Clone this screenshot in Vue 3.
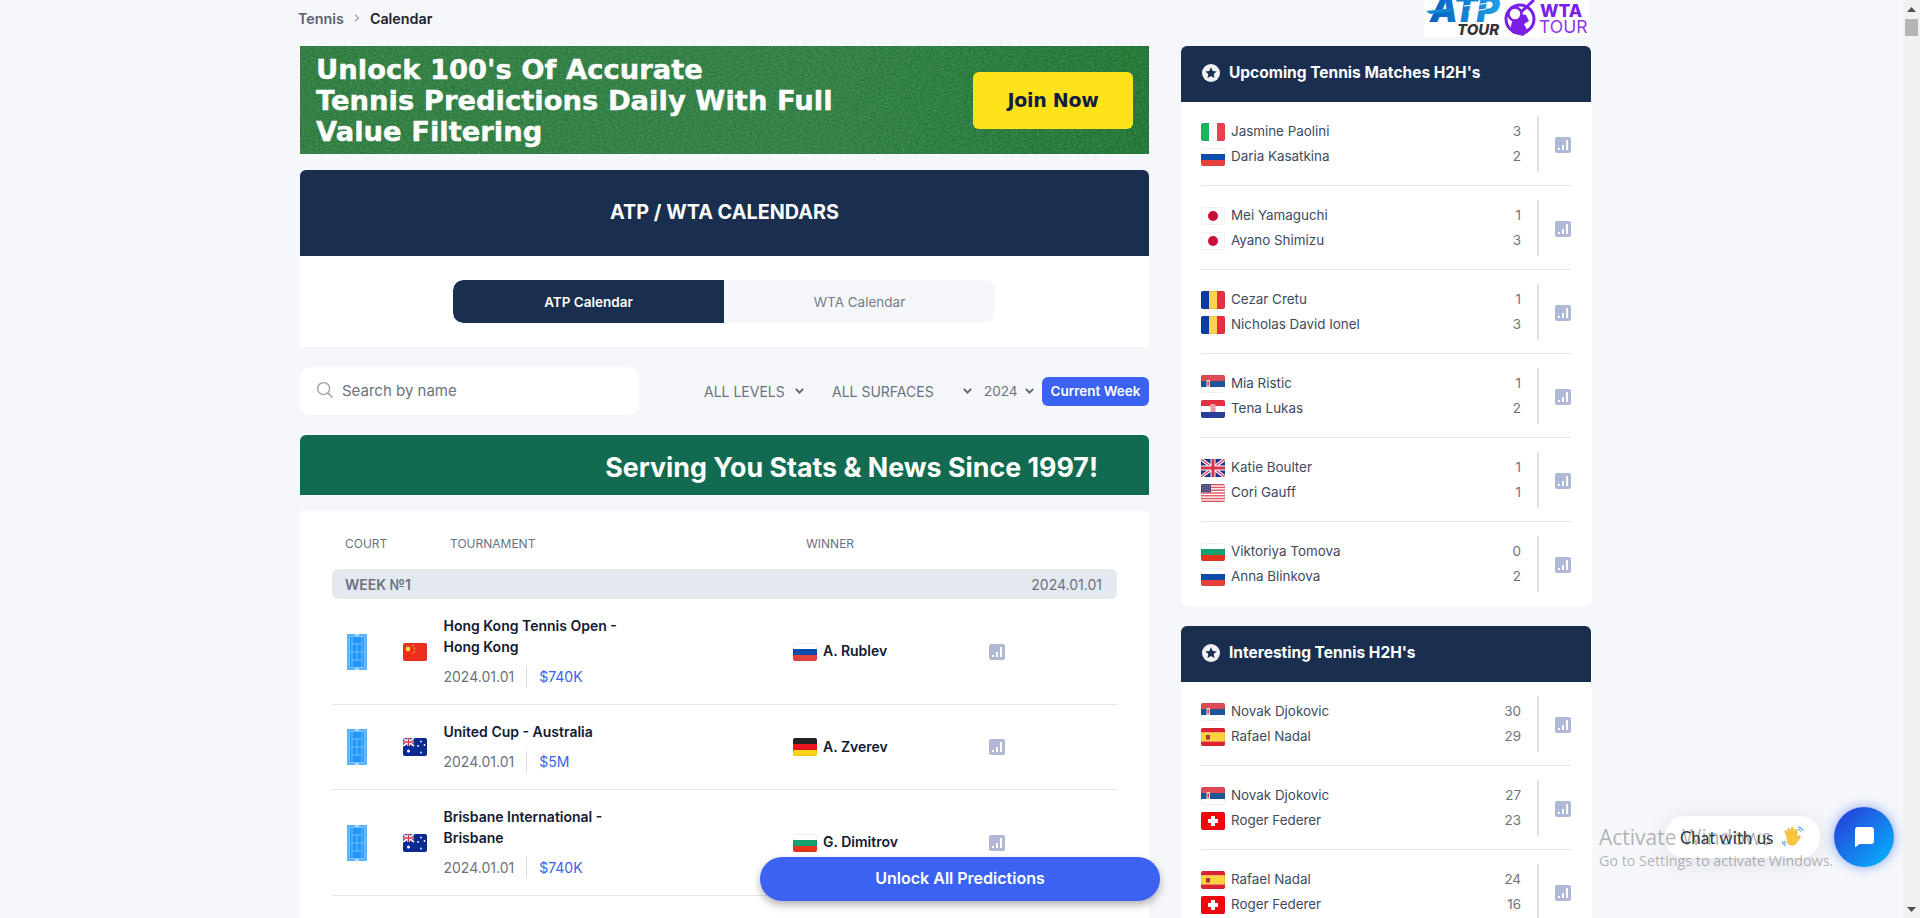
<script setup>
import { h } from 'vue'

const R = (x, y, w, hh, fill) => h('rect', { x, y, width: w, height: hh, fill })
const P = (d, fill, stroke, sw) => h('path', { d, fill: fill || 'none', stroke: stroke || 'none', 'stroke-width': sw || 0 })
const C = (cx, cy, r, fill) => h('circle', { cx, cy, r, fill })
const H3 = (a, b, c) => [R(0, 0, 24, 6, a), R(0, 6, 24, 6, b), R(0, 12, 24, 6, c)]
const V3 = (a, b, c) => [R(0, 0, 8, 18, a), R(8, 0, 8, 18, b), R(16, 0, 8, 18, c)]
const usStripes = () => {
  const out = [R(0, 0, 24, 18, '#fff')]
  for (let i = 0; i < 7; i++) out.push(R(0, i * 2.77, 24, 1.38, '#e0525c'))
  out.push(R(0, 0, 10, 8.3, '#3c3b6e'))
  for (let r = 0; r < 4; r++) for (let c = 0; c < 5; c++) out.push(R(0.8 + c * 1.9, 0.8 + r * 1.9, 0.8, 0.8, '#d8d8e8'))
  return out
}
const aus = () => [
  R(0, 0, 24, 18, '#0b2a92'),
  R(0, 0, 11, 8, '#1a2f9a'),
  P('M0 0L11 8M11 0L0 8', 'none', '#fff', 1.6),
  P('M5.5 0V8M0 4H11', 'none', '#fff', 2.6),
  P('M5.5 0V8M0 4H11', 'none', '#d9324a', 1.3),
  C(5.5, 13, 1.5, '#fff'), C(18, 3.5, .9, '#fff'), C(21.5, 7, .9, '#fff'), C(18, 14.5, .9, '#fff'), C(15, 8, .9, '#fff')
]
const flags = {
  it: () => V3('#1cb65d', '#fff', '#e8414f'),
  ru: () => H3('#fff', '#0d4ca8', '#e6403a'),
  jp: () => [R(0, 0, 24, 18, '#fff'), C(12, 9, 5, '#c90f3c')],
  ro: () => V3('#0b3d9c', '#fcd34f', '#e6303f'),
  rs: () => [...H3('#e04a55', '#1f5594', '#fff'), R(5.5, 5, 3.5, 7, '#f5d0d5'), R(6.5, 6.5, 1.5, 4, '#d9324a')],
  hr: () => [...H3('#e8303f', '#fff', '#2b3d9b'), R(9.5, 4, 5, 8, '#e9909a'), R(10.5, 5, 1, 1, '#fff'), R(12.5, 7, 1, 1, '#fff'), R(10.5, 9, 1, 1, '#fff')],
  gb: () => [
    R(0, 0, 24, 18, '#1f2f93'),
    P('M0 0L24 18M24 0L0 18', 'none', '#fff', 3.4),
    P('M0 0L24 18M24 0L0 18', 'none', '#d9324a', 1.1),
    P('M12 0V18M0 9H24', 'none', '#fff', 5),
    P('M12 0V18M0 9H24', 'none', '#d9324a', 3)
  ],
  us: usStripes,
  bg: () => H3('#fff', '#16a06e', '#e5341c'),
  de: () => H3('#222', '#e8161a', '#fbd214'),
  cn: () => [R(0, 0, 24, 18, '#ee2e1c'), C(5, 6, 2.4, '#fcd53f'), C(10, 2.8, .8, '#f8b13a'), C(11.5, 5.2, .8, '#f8b13a'), C(11.5, 8, .8, '#f8b13a'), C(10, 10, .8, '#f8b13a')],
  au: aus,
  es: () => [R(0, 0, 24, 4.5, '#df2230'), R(0, 4.5, 24, 9, '#fcd23f'), R(0, 13.5, 24, 4.5, '#df2230'), R(5, 7, 4, 4.5, '#b3342a')],
  ch: () => [R(0, 0, 24, 18, '#f5060f'), R(10, 4, 4, 10, '#fff'), R(7, 7, 10, 4, '#fff')]
}
const Flag = (props) =>
  h('svg', { viewBox: '0 0 24 18', width: 24, height: 18, style: 'display:block' }, [
    ...flags[props.c](),
    h('rect', { x: .5, y: .5, width: 23, height: 17, fill: 'none', stroke: 'rgba(30,40,70,.07)' })
  ])
Flag.props = ['c']

const tournaments = [
  { title: 'Hong Kong Tennis Open - Hong Kong', date: '2024.01.01', prize: '$740K', flag: 'cn', wFlag: 'ru', winner: 'A. Rublev' },
  { title: 'United Cup - Australia', date: '2024.01.01', prize: '$5M', flag: 'au', wFlag: 'de', winner: 'A. Zverev' },
  { title: 'Brisbane International - Brisbane', date: '2024.01.01', prize: '$740K', flag: 'au', wFlag: 'bg', winner: 'G. Dimitrov' }
]
const upcoming = [
  [['it', 'Jasmine Paolini', 3], ['ru', 'Daria Kasatkina', 2]],
  [['jp', 'Mei Yamaguchi', 1], ['jp', 'Ayano Shimizu', 3]],
  [['ro', 'Cezar Cretu', 1], ['ro', 'Nicholas David Ionel', 3]],
  [['rs', 'Mia Ristic', 1], ['hr', 'Tena Lukas', 2]],
  [['gb', 'Katie Boulter', 1], ['us', 'Cori Gauff', 1]],
  [['bg', 'Viktoriya Tomova', 0], ['ru', 'Anna Blinkova', 2]]
]
const interesting = [
  [['rs', 'Novak Djokovic', 30], ['es', 'Rafael Nadal', 29]],
  [['rs', 'Novak Djokovic', 27], ['ch', 'Roger Federer', 23]],
  [['es', 'Rafael Nadal', 24], ['ch', 'Roger Federer', 16]]
]
const cards = [
  { title: "Upcoming Tennis Matches H2H's", rows: upcoming },
  { title: "Interesting Tennis H2H's", rows: interesting }
]
</script>

<template>
  <div class="page">
    <main class="main">
      <nav class="crumbs">
        <span class="crumb-a">Tennis</span>
        <svg class="crumb-sep" width="6" height="8" viewBox="0 0 6 8"><path d="M1 .8L4.6 4L1 7.2" fill="none" stroke="#6b7280" stroke-width="1"/></svg>
        <span class="crumb-b">Calendar</span>
      </nav>

      <section class="promo">
        <svg class="grass" width="849" height="108">
          <filter id="grassNoise" x="0" y="0" width="100%" height="100%">
            <feTurbulence type="fractalNoise" baseFrequency="0.38 0.5" numOctaves="3" seed="4"/>
            <feColorMatrix type="matrix" values="0 0 0 0 0.7  0 0 0 0 0.9  0 0 0 0 0.7  0.9 0 0 0 -0.3"/>
          </filter>
          <rect width="849" height="108" filter="url(#grassNoise)"/>
        </svg>
        <p class="promo-text">Unlock 100's Of Accurate<br>Tennis Predictions Daily With Full<br>Value Filtering</p>
        <span class="join">Join Now</span>
      </section>

      <section class="cal-card">
        <h1 class="cal-title">ATP / WTA CALENDARS</h1>
        <div class="tabs-wrap">
          <div class="tabs">
            <span class="tab active">ATP Calendar</span>
            <span class="tab">WTA Calendar</span>
          </div>
        </div>
      </section>

      <div class="filters">
        <label class="search">
          <svg width="18" height="18" viewBox="0 0 18 18"><circle cx="7.6" cy="7.6" r="6" fill="none" stroke="#9aa3ad" stroke-width="1.4"/><path d="M12 12l4.4 4.6" stroke="#9aa3ad" stroke-width="1.4" fill="none"/></svg>
          <span class="search-ph">Search by name</span>
        </label>
        <div class="selects">
          <span class="sel sel-1">ALL LEVELS<svg width="9" height="6" viewBox="0 0 9 6"><path d="M.8 .8l3.700 3.800L8.200 .8" fill="none" stroke="#5e6875" stroke-width="1.8"/></svg></span>
          <span class="sel sel-2">ALL SURFACES<svg width="9" height="6" viewBox="0 0 9 6"><path d="M.8 .8l3.700 3.800L8.200 .8" fill="none" stroke="#5e6875" stroke-width="1.8"/></svg></span>
          <span class="sel sel-3">2024<svg width="9" height="6" viewBox="0 0 9 6"><path d="M.8 .8l3.700 3.800L8.200 .8" fill="none" stroke="#5e6875" stroke-width="1.8"/></svg></span>
          <span class="current">Current Week</span>
        </div>
      </div>

      <div class="since">Serving You Stats &amp; News Since 1997!</div>

      <section class="table">
        <div class="thead">
          <span class="th-court">COURT</span>
          <span class="th-tour">TOURNAMENT</span>
          <span>WINNER</span>
        </div>
        <div class="week"><b>WEEK №1</b><span>2024.01.01</span></div>
        <div v-for="t in tournaments" :key="t.title" class="trow">
          <svg class="court" width="20" height="36" viewBox="0 0 20 36">
            <rect width="20" height="36" fill="#5cb3fc"/>
            <rect x="2.5" y="2.5" width="15" height="31" fill="#2196fb"/>
            <path d="M2.5 2.5h15v31h-15zM5 2.5v31M15 2.5v31M5 10h10M5 26h10M10 10v16M2.5 18h15" fill="none" stroke="#7cc3fd" stroke-width=".9"/>
            <path d="M8 1h4M8 35h4" stroke="#fff" stroke-width="1.2"/>
          </svg>
          <span class="flag"><Flag :c="t.flag"/></span>
          <div class="tcell">
            <div class="ttitle">{{ t.title }}</div>
            <div class="tmeta"><span class="tdate">{{ t.date }}</span><span class="tprize">{{ t.prize }}</span></div>
          </div>
          <div class="twin"><span class="flag"><Flag :c="t.wFlag"/></span><b>{{ t.winner }}</b></div>
          <svg class="stat" width="16" height="16" viewBox="0 0 16 16"><rect width="16" height="16" rx="2" fill="#b1b8d6"/><path d="M3 11h2v2H3zM7 8h2v5H7zM11 3h2v10h-2z" fill="#fff"/></svg>
        </div>
      </section>
    </main>

    <aside class="side">
      <div class="logos">
        <svg width="165" height="37" viewBox="0 0 165 37">
          <defs>
            <linearGradient id="atpGrad" x1="0" y1="0" x2="1" y2="0">
              <stop offset="0" stop-color="#0a5fc0"/>
              <stop offset="1" stop-color="#1ea0e6"/>
            </linearGradient>
          </defs>
          <rect width="165" height="37" fill="#fff"/>
          <text x="6" y="22" class="logo-atp" fill="url(#atpGrad)">ATP</text>
          <path d="M2 11L30 8L24 12L6 14Z" fill="#1087d8"/>
          <path d="M40 6L66 3M44 12L62 9" stroke="#fff" stroke-width="1"/>
          <text x="33" y="35" class="logo-tour">TOUR</text>
          <circle cx="96" cy="19" r="14" fill="none" stroke="#7b1fe8" stroke-width="3"/>
          <path d="M88 33c-3-8 1-16 8-19l6 1 3 6-5 3 4 8-5 4z" fill="#7b1fe8"/>
          <path d="M97 12L110 0" stroke="#7b1fe8" stroke-width="3"/>
          <circle cx="91" cy="14" r="6.500" fill="#fff" stroke="#7b1fe8" stroke-width="2.500"/>
          <text x="116" y="17" class="logo-wta">WTA</text>
          <text x="115" y="33" class="logo-wt">TOUR</text>
        </svg>
      </div>

      <section v-for="card in cards" :key="card.title" class="card">
        <header class="card-head">
          <svg width="18" height="18" viewBox="0 0 18 18"><circle cx="9" cy="9" r="9" fill="#f1f3f6"/><path d="M9 3.2l1.7 3.7 4 .5-3 2.7.8 4L9 12.1l-3.5 2 .8-4-3-2.7 4-.5z" fill="#1a2f50"/></svg>
          <h2>{{ card.title }}</h2>
        </header>
        <div v-for="(row, i) in card.rows" :key="i" class="match">
          <div class="players">
            <div v-for="p in row" :key="p[1]" class="player">
              <span class="flag"><Flag :c="p[0]"/></span>
              <span class="pname">{{ p[1] }}</span>
              <span class="pscore">{{ p[2] }}</span>
            </div>
          </div>
          <div class="mstat">
            <svg width="16" height="16" viewBox="0 0 16 16"><rect width="16" height="16" rx="2" fill="#b1b8d6"/><path d="M3 11h2v2H3zM7 8h2v5H7zM11 3h2v10h-2z" fill="#fff"/></svg>
          </div>
        </div>
      </section>
    </aside>

    <button class="unlock">Unlock All Predictions</button>

    <div class="chat-bubble">
      <span>Chat with us</span>
      <svg width="25" height="25" viewBox="0 0 22 22">
        <path d="M5 9L3.5 6.5c-.7-1.2 1-2 1.700-1L7 8 5.800 4.400c-.4-1.300 1.500-1.800 2-.6L9.500 7.500 9 3c-.1-1.300 1.800-1.400 2-.2l1 5 .3-3c.2-1.200 1.900-1 1.900.3l-.2 6 1.500-1.500c1-.9 2.200.3 1.400 1.300l-3 4.500c-2 3-6 3-8 .5z" fill="#fcc63f" stroke="#e8a92a" stroke-width=".5"/>
        <path d="M15 1.500c2 .3 3.500 1.500 4.500 3.500M14.500 3.500c1.300.2 2.500 1 3 2.300M1 14c.3 2 1.500 3.500 3 4.500M3 14c.2 1 .7 1.800 1.500 2.500" fill="none" stroke="#5aa9e6" stroke-width="1"/>
      </svg>
    </div>
    <div class="chat-btn">
      <svg width="20" height="20" viewBox="0 0 20 20"><path d="M3 0h14a3 3 0 0 1 3 3v11a3 3 0 0 1-3 3H5.500L1 20.500V3a3 3 0 0 1 2-3z" fill="#fff"/></svg>
    </div>

    <div class="watermark">
      <div class="wm-1">Activate Windows</div>
      <div class="wm-2">Go to Settings to activate Windows.</div>
    </div>

    <div class="scrollbar">
      <svg width="9" height="5" viewBox="0 0 9 5"><path d="M4.500 0L9 5H0z" fill="#505050"/></svg>
      <div class="thumb"></div>
      <div class="track-gap"></div>
      <svg width="9" height="5" viewBox="0 0 9 5"><path d="M4.500 5L9 0H0z" fill="#505050"/></svg>
    </div>
  </div>
</template>

<style scoped>
.page {
  position: relative;
  display: flex;
  align-items: stretch;
  gap: 32px;
  height: 918px;
  padding-left: 300px;
  box-sizing: border-box;
  overflow: hidden;
  background: #f5f7fa;
  font-family: Inter, "Liberation Sans", sans-serif;
}
.main { width: 849px; flex: none; display: flex; flex-direction: column; }
.crumbs { height: 36px; display: flex; align-items: center; gap: 9px; margin-left: -2px; font-size: 14.300px; font-weight: 600; margin-bottom: 10px; }
.crumb-a { color: #5b6470; }
.crumb-b { color: #1a2433; margin-left: 1px; }
.crumb-sep { margin-left: 1px; }

.promo {
  position: relative;
  height: 108px;
  flex: none;
  margin-bottom: 16px;
  overflow: hidden;
  display: flex;
  align-items: center;
  justify-content: space-between;
  padding: 0 16px;
  box-sizing: border-box;
  background: linear-gradient(90deg, #2c7a3e 0%, #2d7d42 60%, #1f7232 100%);
}
.grass { position: absolute; inset: 0; opacity: .34; }
.promo-text {
  position: relative;
  margin: 0;
  font-family: "DejaVu Sans", Inter, sans-serif;
  font-size: 27.400px;
  line-height: 31px;
  font-weight: 700;
  color: #fff;
  -webkit-text-stroke: .4px #fff;
}
.join {
  position: relative;
  width: 160px;
  height: 57px;
  display: flex;
  align-items: center;
  justify-content: center;
  background: #fee31a;
  border-radius: 6px;
  color: #141c44;
  font-family: "DejaVu Sans", Inter, sans-serif;
  font-size: 19px;
  font-weight: 700;
  letter-spacing: -.3px;
}

.cal-card { background: #fff; flex: none; margin-bottom: 20px; border-radius: 6px 6px 0 0; }
.cal-title {
  margin: 0;
  height: 84px;
  padding-bottom: 2px;
  display: flex;
  align-items: center;
  justify-content: center;
  background: #1a2f50;
  border-radius: 6px 6px 0 0;
  color: #fff;
  font-size: 19.800px;
  font-weight: 700;
}
.tabs-wrap { display: flex; justify-content: center; padding: 24px 1px 24px 0; }
.tabs { width: 542px; height: 43px; display: flex; border-radius: 10px; overflow: hidden; background: #f5f7fa; }
.tab { flex: 1; display: flex; align-items: center; justify-content: center; font-size: 13.500px; color: #777e88; }
.tab.active { background: #1a2f50; color: #fff; font-weight: 600; border-radius: 10px 0 0 10px; }

.filters { display: flex; align-items: center; justify-content: space-between; height: 48px; margin-bottom: 20px; flex: none; }
.search {
  width: 339px;
  height: 48px;
  background: #fff;
  border-radius: 10px;
  display: flex;
  align-items: center;
  gap: 8px;
  padding: 0 0 2px 16px;
  box-sizing: border-box;
}
.search-ph { font-size: 15px; color: #6b7280; }
.selects { display: flex; align-items: center; height: 29px; }
.sel { display: flex; align-items: center; justify-content: space-between; font-size: 14px; color: #6b7280; }
.sel-1 { width: 100px; margin-right: 28px; }
.sel-2 { width: 140px; margin-right: 12px; }
.sel-3 { width: 50px; margin-right: 8px; font-size: 13.500px; }
.current {
  width: 107px;
  height: 29px;
  display: flex;
  align-items: center;
  justify-content: center;
  background: #3b62f3;
  border-radius: 6px;
  color: #fff;
  font-size: 13.500px;
  font-weight: 600;
}

.since {
  height: 60px;
  flex: none;
  box-sizing: border-box;
  padding: 3px 51px 0 0;
  display: flex;
  align-items: center;
  justify-content: flex-end;
  margin-bottom: 16px;
  background: #126b50;
  border-radius: 6px 6px 0 0;
  color: #fff;
  font-size: 26.800px;
  font-weight: 700;
}

.table { flex: 1; background: #fff; padding: 0 32px; }
.thead { height: 58px; box-sizing: border-box; padding: 7px 0 0 13px; display: flex; align-items: center; font-size: 12px; color: #6b7280; }
.th-court { width: 105px; }
.th-tour { width: 356px; }
.week {
  height: 30px;
  display: flex;
  align-items: center;
  justify-content: space-between;
  padding: 0 15px 0 13px;
  background: #e4e9f0;
  border-radius: 6px;
  font-size: 14px;
  color: #6b7280;
}
.week b { font-weight: 600; }
.trow {
  display: flex;
  align-items: center;
  padding: 17px 0 17px 15px;
  border-bottom: 1px solid #e3e6ea;
}
.court { flex: none; margin-right: 36px; }
.flag { display: block; width: 24px; height: 18px; flex: none; border-radius: 2px; overflow: hidden; }
.tcell { width: 349.500px; margin-left: 16.500px; flex: none; }
.ttitle { width: 190px; margin-top: -1px; font-size: 14px; line-height: 21px; font-weight: 600; color: #111a33; }
.tmeta { display: flex; margin-top: 9px; height: 21px; align-items: center; font-size: 14px; }
.tdate { color: #6b7280; padding-right: 12px; border-right: 1px solid #d9dde3; line-height: 21px; }
.tprize { color: #3b62f3; padding-left: 12px; }
.twin { width: 196px; flex: none; display: flex; align-items: center; gap: 6px; font-size: 14px; color: #111a33; }
.twin b { font-weight: 600; margin-top: -2px; }
.stat { flex: none; }

.side { width: 411px; flex: none; display: flex; flex-direction: column; }
.logos { height: 46px; flex: none; display: flex; justify-content: flex-end; padding-right: 3px; box-sizing: border-box; }
.logos svg { display: block; }
.logo-atp { font: italic 900 35px Inter, sans-serif; letter-spacing: -1px; }
.logo-tour { font: italic 800 15px Inter, sans-serif; fill: #333; }
.logo-wta { font: 800 17.500px Inter, sans-serif; fill: #7b1fe8; }
.logo-wt { font: 400 17.500px Inter, sans-serif; fill: #8a34ea; }

.card { background: #fff; border-radius: 6px; margin-bottom: 20px; flex: none; }
.card-head {
  height: 56px;
  box-sizing: border-box;
  padding: 0 0 3px 21px;
  display: flex;
  align-items: center;
  gap: 9px;
  background: #1a2f50;
  border-radius: 6px 6px 0 0;
  margin-right: 1px;
}
.card-head h2 { margin: 0; font-size: 15.500px; font-weight: 700; color: #fff; }
.match {
  display: flex;
  margin: 0 21px 0 20px;
  padding: 14px 0 13px;
  border-bottom: 1px solid #e3e5e8;
}
.match:last-child { border-bottom: 0; padding-bottom: 14px; }
.players { width: 320px; height: 56px; flex: none; display: flex; flex-direction: column; justify-content: center; gap: 7px; }
.player { display: flex; align-items: center; height: 18px; font-size: 13.400px; }
.pname { flex: 1; margin: -2px 0 0 6px; color: #3d4a5f; }
.pscore { color: #6b7280; margin-top: -2px; }
.mstat {
  margin-left: 16px;
  flex: 1;
  border-left: 2px solid #dcdfe5;
  display: flex;
  align-items: center;
  justify-content: flex-end;
  padding-top: 2px;
}

.unlock {
  position: absolute;
  left: 760px;
  top: 857px;
  width: 400px;
  height: 44px;
  padding: 0 0 2px;
  border: 0;
  border-radius: 22px;
  background: #3b62f3;
  box-shadow: 0 4px 8px rgba(0, 0, 0, .3);
  color: #fff;
  font: 600 16px Inter, sans-serif;
}
.chat-bubble {
  position: absolute;
  left: 1665px;
  top: 816px;
  width: 155px;
  height: 42px;
  display: flex;
  align-items: center;
  gap: 8px;
  padding-left: 15px;
  box-sizing: border-box;
  background: #fff;
  border-radius: 20px;
  box-shadow: 0 4px 24px rgba(20, 30, 60, .1);
  font: 400 17px Lato, sans-serif;
  color: #2d3748;
}
.chat-btn {
  position: absolute;
  left: 1834px;
  top: 807px;
  width: 60px;
  height: 60px;
  display: flex;
  align-items: center;
  justify-content: center;
  border-radius: 50%;
  background: linear-gradient(135deg, #2a35d6, #03b9ff);
  box-shadow: 0 0 12px rgba(40, 90, 240, .55);
}
.watermark {
  position: absolute;
  left: 1599px;
  top: 823px;
  color: rgba(60, 60, 60, .38);
  font-family: "Open Sans", sans-serif;
  pointer-events: none;
}
.wm-1 { font-size: 21px; line-height: 28px; }
.wm-2 { font-size: 14.300px; line-height: 19px; }
.scrollbar {
  position: absolute;
  right: 0;
  top: 0;
  bottom: 0;
  width: 17px;
  background: #f1f1f1;
  display: flex;
  flex-direction: column;
  align-items: center;
  padding: 7px 0 6px;
  box-sizing: border-box;
}
.thumb { width: 13px; height: 17px; margin-top: 7px; background: #b5b5b5; }
.track-gap { flex: 1; }
</style>

<style>
html, body { margin: 0; overflow: hidden; }
</style>
